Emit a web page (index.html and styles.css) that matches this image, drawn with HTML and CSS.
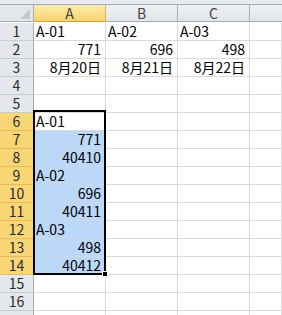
FILE: index.html
```html
<!DOCTYPE html>
<html lang="ja">
<head>
  <meta charset="UTF-8">
  <title>Sheet1</title>
  <link rel="stylesheet" href="styles.css">
</head>
<body>
  <div class="sheet">
    <div class="strip"></div>
    <div class="grid">
      <div class="corner">
        <svg width="10" height="10" viewBox="0 0 10 10"><polygon points="10,0 10,10 0,10" fill="#c4c8ce"/></svg>
      </div>
      <div class="col-head on">A</div>
      <div class="col-head">B</div>
      <div class="col-head">C</div>
      <div class="col-head last"></div>

      <div class="rh">1</div>
      <div class="c">A-01</div>
      <div class="c">A-02</div>
      <div class="c">A-03</div>
      <div class="c"></div>

      <div class="rh">2</div>
      <div class="c num">771</div>
      <div class="c num">696</div>
      <div class="c num">498</div>
      <div class="c"></div>

      <div class="rh">3</div>
      <div class="c num">8月20日</div>
      <div class="c num">8月21日</div>
      <div class="c num">8月22日</div>
      <div class="c"></div>

      <div class="rh">4</div>
      <div class="c"></div><div class="c"></div><div class="c"></div><div class="c"></div>

      <div class="rh">5</div>
      <div class="c"></div><div class="c"></div><div class="c"></div><div class="c"></div>

      <div class="rh on">6</div>
      <div class="c">A-01</div>
      <div class="c"></div><div class="c"></div><div class="c"></div>

      <div class="rh on">7</div>
      <div class="c num sel">771</div>
      <div class="c"></div><div class="c"></div><div class="c"></div>

      <div class="rh on">8</div>
      <div class="c num sel">40410</div>
      <div class="c"></div><div class="c"></div><div class="c"></div>

      <div class="rh on">9</div>
      <div class="c sel">A-02</div>
      <div class="c"></div><div class="c"></div><div class="c"></div>

      <div class="rh on">10</div>
      <div class="c num sel">696</div>
      <div class="c"></div><div class="c"></div><div class="c"></div>

      <div class="rh on">11</div>
      <div class="c num sel">40411</div>
      <div class="c"></div><div class="c"></div><div class="c"></div>

      <div class="rh on">12</div>
      <div class="c sel">A-03</div>
      <div class="c"></div><div class="c"></div><div class="c"></div>

      <div class="rh on">13</div>
      <div class="c num sel">498</div>
      <div class="c"></div><div class="c"></div><div class="c"></div>

      <div class="rh on">14</div>
      <div class="c num sel">40412</div>
      <div class="c"></div><div class="c"></div><div class="c"></div>

      <div class="rh">15</div>
      <div class="c"></div><div class="c"></div><div class="c"></div><div class="c"></div>

      <div class="rh">16</div>
      <div class="c"></div><div class="c"></div><div class="c"></div><div class="c"></div>

      <div class="rh"></div>
      <div class="c"></div><div class="c"></div><div class="c"></div><div class="c"></div>
    </div>

    <!-- range A6:A14 -->
    <div class="selection">
      <span class="handle"></span>
    </div>
  </div>
</body>
</html>
```

FILE: styles.css
```css
* {
  margin: 0;
  padding: 0;
  box-sizing: border-box;
}
body {
  width: 282px;
  height: 315px;
  overflow: hidden;
  background: #fff;
  font-family: "Noto Sans CJK JP", "Noto Sans", sans-serif;
  font-size: 14px;
  color: #000;
}
.sheet {
  position: relative;
}
.strip {
  height: 5px;
  background: #e6e9ee;
  border-bottom: 1px solid #a3abb5;
}
.grid {
  display: grid;
  grid-template-columns: 34px 72px 72px 72px 1fr;
  grid-auto-rows: 18px;
}
.grid > div {
  line-height: 17px;
  white-space: nowrap;
}
.corner {
  height: 17px;
  background: #e4e7eb;
  border-right: 1px solid #a3abb5;
  border-bottom: 1px solid #a3abb5;
  display: flex;
  justify-content: flex-end;
  align-items: flex-end;
  padding: 0 3px 2px 0;
}
.col-head {
  height: 17px;
  text-align: center;
  color: #444;
  background: linear-gradient(#eef0f3, #e2e5ea);
  border-right: 1px solid #a9b0b9;
  border-bottom: 1px solid #a3abb5;
}
.col-head.on {
  background: linear-gradient(#fdecae, #f8d46e);
  border-right-color: #e7b04a;
  border-bottom-color: #e29f2e;
}
.col-head.last {
  border-right: none;
}
.rh {
  text-align: center;
  color: #2b2b2b;
  background: #e4e7eb;
  border-right: 1px solid #a3abb5;
  border-bottom: 1px solid #c8cdd3;
}
.rh.on {
  background: #f9d675;
  border-right-color: #e2a93c;
  border-bottom-color: #e8bb58;
}
.c {
  padding: 0 4px 0 2px;
  border-right: 1px solid #dadada;
  border-bottom: 1px solid #dadada;
}
.num {
  text-align: right;
}
.sel {
  background: #bcd8f8;
  border-bottom-color: #cbd8e6;
}
.selection {
  position: absolute;
  left: 33px;
  top: 110px;
  width: 73px;
  height: 165px;
  border: 2px solid #000;
}
.handle {
  position: absolute;
  right: -4px;
  bottom: -4px;
  width: 6px;
  height: 6px;
  background: #000;
  border: 1px solid #fff;
}
```
